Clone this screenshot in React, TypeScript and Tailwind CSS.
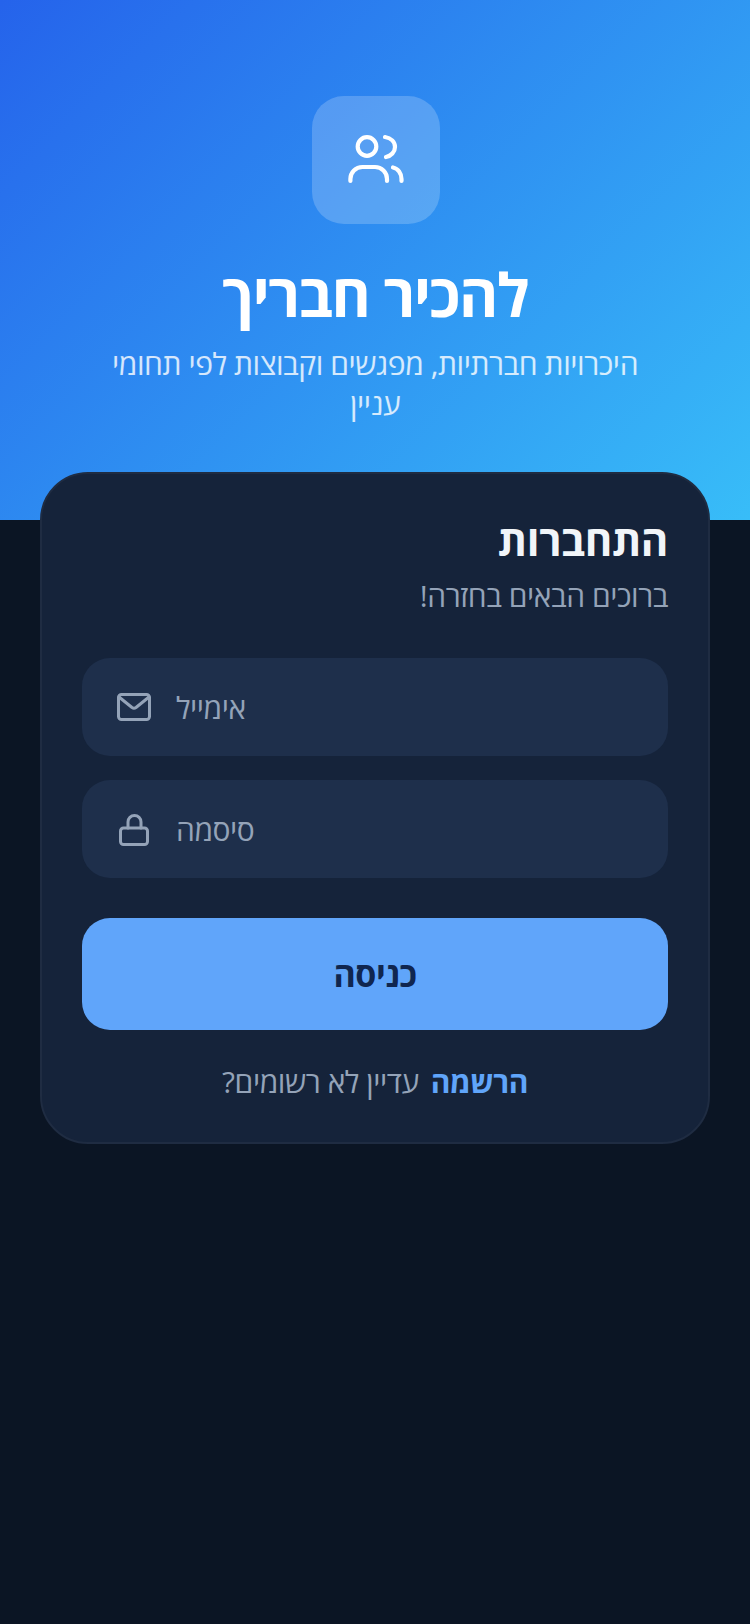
export default function App() {
  const font = "font-['Open_Sans','Noto_Sans_CJK_SC',sans-serif]";
  return (
    <div dir="rtl" className={`w-[750px] h-[1624px] overflow-hidden bg-[#0b1524] tracking-[-0.028em] ${font}`}>
      <header className="h-[520px] pt-[96px] bg-[linear-gradient(135deg,#2563eb,#38bdf8)] flex flex-col items-center">
        <div className="ml-[2px] w-[128px] h-[128px] rounded-[32px] bg-white/20 flex items-center justify-center">
          <svg width="56" height="56" viewBox="0 0 56 56" fill="none" stroke="white" strokeWidth="4.200" strokeLinecap="round" strokeLinejoin="round">
            <circle cx="19" cy="14.500" r="9.300" />
            <path d="M2.400 49v-2a12 12 0 0 1 12-12h12.600a12 12 0 0 1 12 12v2" />
            <path d="M37 5c6 1 10 5 10 10s-4 9-9 10" />
            <path d="M45 35.500c5 1 8.500 6 8.500 11.500v2" />
          </svg>
        </div>
        <h1 className="mt-[32px] text-[60px] leading-[76px] font-bold tracking-[-0.025em] text-white">להכיר חבריך</h1>
        <p className="mt-[12px] w-[560px] text-center text-[30px] leading-[40px] text-white/80">היכרויות חברתיות, מפגשים וקבוצות לפי תחומי עניין</p>
      </header>
      <main className="mx-[40px] -mt-[48px] relative h-[672px] rounded-[48px] border-2 border-[#1f2c42] bg-[#15233a] px-[40px] pt-[42px]">
        <h2 className="text-[42px] leading-[48px] font-bold text-[#f1f5f9]">התחברות</h2>
        <p className="mt-[12px] text-[30px] leading-[40px] text-[#94a3b8]">ברוכים הבאים בחזרה!</p>
        <div className="mt-[42px] flex flex-col gap-[24px]">
          <div dir="ltr" className="h-[98px] rounded-[28px] bg-[#1e2f4b] flex items-center pl-[34px] gap-[24px]">
            <svg width="36" height="36" viewBox="0 0 36 36" fill="none" stroke="#94a3b8" strokeWidth="3" strokeLinejoin="round" strokeLinecap="round">
              <rect x="2.500" y="5.500" width="31" height="25" rx="3" />
              <path d="M3 8l13 10.500a3.500 3.500 0 0 0 4 0L33 8" />
            </svg>
            <span className="text-[30px] text-[#94a3b8]">אימייל</span>
          </div>
          <div dir="ltr" className="h-[98px] rounded-[28px] bg-[#1e2f4b] flex items-center pl-[34px] gap-[24px]">
            <svg width="36" height="36" viewBox="0 0 36 36" fill="none" stroke="#94a3b8" strokeWidth="3" strokeLinejoin="round" strokeLinecap="round">
              <rect x="4.500" y="17" width="27" height="16.500" rx="3" />
              <path d="M12 17v-6a6.500 6.500 0 0 1 13 0v6" />
            </svg>
            <span className="text-[30px] text-[#94a3b8]">סיסמה</span>
          </div>
        </div>
        <button className="mt-[40px] w-full h-[112px] rounded-[28px] bg-[#60a5fa] text-[#10264f] text-[34px] font-bold">כניסה</button>
        <div className="mt-[28px] flex justify-center gap-[12px] text-[30px] leading-[48px]">
          <span className="font-bold text-[#60a5fa]">הרשמה</span>
          <span className="text-[#94a3b8]">עדיין לא רשומים?</span>
        </div>
      </main>
    </div>
  );
}
